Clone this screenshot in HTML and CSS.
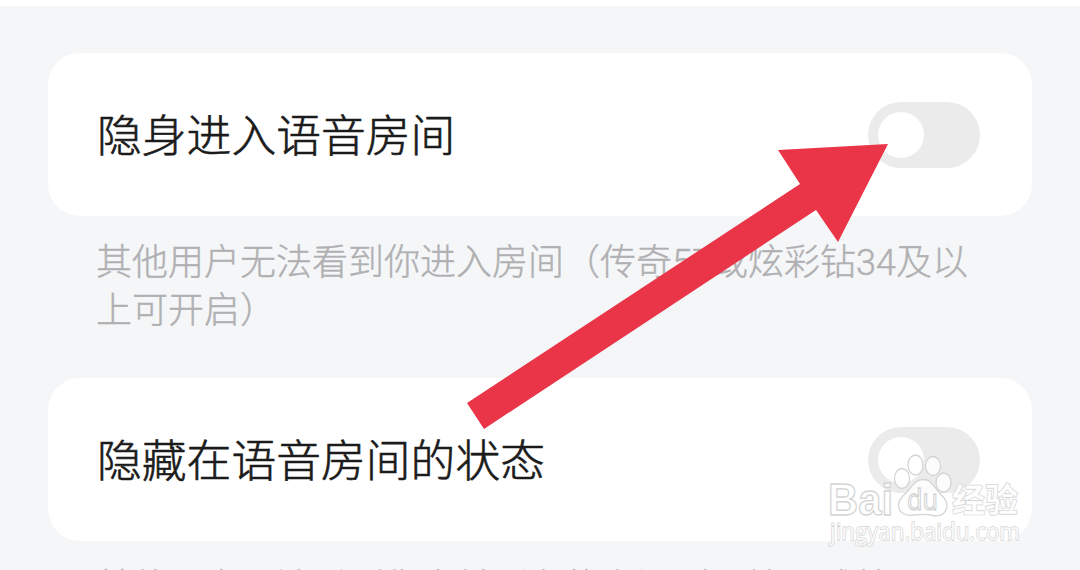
FILE: index.html
```html
<!DOCTYPE html>
<html lang="zh-CN">
<head>
<meta charset="UTF-8">
<meta name="viewport" content="width=device-width, initial-scale=1.0">
<title>隐身设置</title>
<link rel="stylesheet" href="styles.css">
</head>
<body>

<div class="settings">
  <div class="card">
    <span class="label">隐身进入语音房间</span>
    <span class="switch"></span>
  </div>
  <p class="hint">其他用户无法看到你进入房间（传奇57或炫彩钻34及以<br>上可开启）</p>

  <div class="card">
    <span class="label">隐藏在语音房间的状态</span>
    <span class="switch"></span>
  </div>
  <p class="hint">其他用户无法看到你当前所在的房间（至尊57或炫</p>
</div>

<!-- ARROW -->
<svg class="arrow" viewBox="0 0 1080 570">
  <polygon points="888,144 838,242 816,210 484,429 467,403 800,184 778,150"/>
</svg>

<!-- WATERMARK -->
<svg class="watermark" viewBox="0 0 210 100">
  <g class="mark">
    <text class="brand" x="7" y="65" textLength="65" lengthAdjust="spacingAndGlyphs">Bai</text>
    <ellipse cx="81" cy="28.5" rx="7.5" ry="10"/>
    <ellipse cx="94.5" cy="15" rx="7.5" ry="10"/>
    <ellipse cx="112" cy="16" rx="7.5" ry="9.5"/>
    <ellipse cx="122.5" cy="32.5" rx="7.5" ry="9.5"/>
    <path d="M102 29.500C94 29.500 91 37 86 42C80 47 76 52 78 58C80 65 88 66 94 65C100 64 106 64 112 65.500C120 67 125.500 63 126 56C126 49 121 46 116 40C111 34 109 29.500 102 29.500Z"/>
    <text class="du" x="86" y="60" textLength="31" lengthAdjust="spacingAndGlyphs">du</text>
    <text class="cn" x="131" y="62" textLength="66" lengthAdjust="spacingAndGlyphs">经验</text>
    <text class="url" x="9" y="90" textLength="190" lengthAdjust="spacingAndGlyphs">jingyan.baidu.com</text>
  </g>
</svg>

</body>
</html>
```

FILE: styles.css
```css
body {
  margin: 0;
  height: 570px;
  overflow: hidden;
  position: relative;
  background: #f5f6f8;
  font-family: Roboto, "Noto Sans CJK SC", sans-serif;
}

.settings {
  box-sizing: border-box;
  height: 570px;
  overflow: hidden;
  border-top: 6px solid #fff;
  padding: 47px 48px 0;
}

.card {
  display: flex;
  align-items: center;
  justify-content: space-between;
  box-sizing: border-box;
  height: 163px;
  padding: 0 52px 0 49px;
  border-radius: 32px;
  background: #fff;
}
.label {
  padding-top: 5px;
  font-size: 44.8px;
  line-height: 60px;
  font-weight: 300;
  color: #1b1b1b;
  -webkit-text-stroke: 0.6px #1b1b1b;
}

.switch {
  box-sizing: border-box;
  width: 112px;
  height: 66px;
  padding: 10px;
  border-radius: 33px;
  background: #ebebeb;
}
.switch::before {
  content: "";
  display: block;
  width: 46px;
  height: 46px;
  border-radius: 50%;
  background: #fff;
}

.hint {
  box-sizing: border-box;
  margin: 0;
  padding: 23px 0 0 48px;
  height: 162px;
  font-size: 36px;
  line-height: 48px;
  font-weight: 300;
  color: #b0b0b2;
  -webkit-text-stroke: 0.4px #b0b0b2;
  white-space: nowrap;
}

.arrow {
  position: absolute;
  left: 0;
  top: 0;
  width: 1080px;
  height: 570px;
  fill: #e93547;
}

.watermark {
  position: absolute;
  left: 821px;
  top: 450px;
  width: 210px;
  height: 100px;
}
.mark {
  fill: #fff;
  fill-opacity: 0.85;
  stroke: #d4d4d4;
  stroke-width: 1.3;
}
.brand { font: bold 45px "Liberation Sans", sans-serif; }
.du { font: 30px "Open Sans", sans-serif; }
.cn { font: bold 33px "Noto Sans CJK SC", sans-serif; paint-order: stroke; }
.url { font: 23px "Open Sans", sans-serif; paint-order: stroke; }
```
